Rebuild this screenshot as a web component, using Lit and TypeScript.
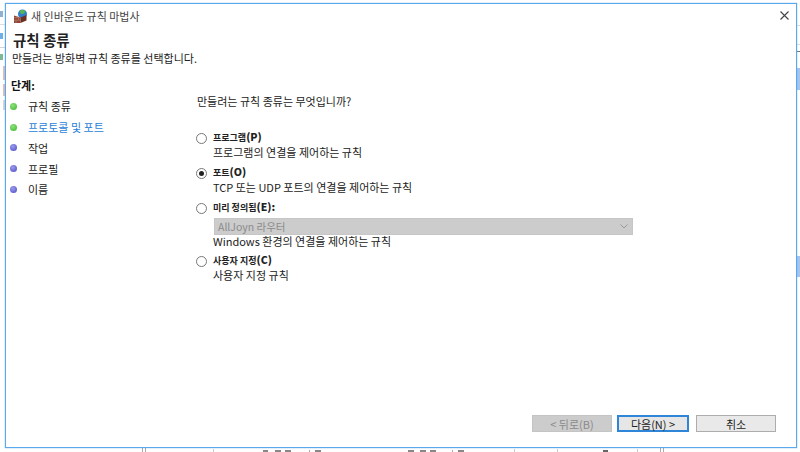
import { css, html, LitElement } from 'lit';
import { customElement } from 'lit/decorators.js';

const steps = [
  { label: '규칙 종류', done: true },
  { label: '프로토콜 및 포트', done: true, current: true },
  { label: '작업' },
  { label: '프로필' },
  { label: '이름' },
];

const options = [
  { label: '프로그램', key: '(P)', desc: '프로그램의 연결을 제어하는 규칙' },
  { label: '포트', key: '(O)', desc: 'TCP 또는 UDP 포트의 연결을 제어하는 규칙', checked: true },
  { label: '미리 정의됨', key: '(E):', desc: 'Windows 환경의 연결을 제어하는 규칙', select: true },
  { label: '사용자 지정', key: '(C)', desc: '사용자 지정 규칙' },
];

// bits of the desktop that peek out around the dialog: x, y, w, h, colour
const peeks: [number, number, number, number, string][] = [
  [0, 11, 3, 6, '#8fb0d0'],
  [0, 33, 3, 6, '#6fb0e6'],
  [0, 24, 5, 1, '#dcdcdc'],
  [0, 47, 5, 1, '#d4d4d4'],
  [0, 54, 3, 6, '#7fb894'],
  [3, 66, 2, 14, '#e2bdb4'],
  [3, 84, 2, 12, '#e2bdb4'],
  [3, 100, 2, 10, '#d4d4d4'],
  [797, 25, 3, 1, '#dcdcdc'],
  [797, 44, 3, 1, '#dcdcdc'],
  [797, 51, 3, 1, '#777'],
  [797, 68, 3, 22, '#a5c4ee'],
  [797, 256, 3, 21, '#a5c4ee'],
  [142, 448, 1, 4, '#aaa'],
  [145, 448, 1, 4, '#aaa'],
  [213, 449, 1, 3, '#ccc'],
  [263, 450, 5, 2, '#888'],
  [275, 450, 6, 2, '#888'],
  [285, 450, 6, 2, '#888'],
  [309, 450, 1, 2, '#aaa'],
  [315, 450, 6, 2, '#888'],
  [408, 450, 6, 2, '#888'],
  [420, 450, 6, 2, '#888'],
  [430, 450, 6, 2, '#888'],
  [452, 450, 1, 2, '#aaa'],
  [458, 450, 6, 2, '#888'],
  [514, 449, 1, 3, '#ccc'],
  [557, 449, 1, 3, '#ccc'],
  [603, 450, 5, 2, '#666'],
  [637, 449, 1, 3, '#ccc'],
  [660, 448, 1, 4, '#aaa'],
  [663, 448, 1, 4, '#aaa'],
];

@customElement('app-root')
export class AppRoot extends LitElement {
  static styles = css`
  :host {
    display: block;
    position: relative;
    width: 800px;
    height: 452px;
    overflow: hidden;
    box-sizing: border-box;
    padding: 3px 3px 4px 5px;
    background: #fff;
    font-family: 'Noto Sans CJK KR', 'Liberation Sans', sans-serif;
    font-size: 11px;
    color: #222;
  }

  .peek { position: absolute; }

  .window {
    position: relative;
    box-sizing: border-box;
    height: 100%;
    display: flex;
    flex-direction: column;
    background: #fff;
    border: 1px solid #5aa8ee;
    box-shadow: 0 0 1px #5aa8ee;
  }

  .titlebar {
    height: 25px;
    display: flex;
    align-items: center;
    gap: 3px;
    padding: 0 0 0 7px;
    color: #444;
    flex: none;
  }
  .titlebar svg.logo { width: 15px; height: 15px; }
  .titlebar span { margin-top: -1px; }
  .titlebar .close { margin-left: auto; margin-right: 7px; margin-top: -3px; width: 9px; height: 9px; }

  .head { padding: 3px 0 0 7px; flex: none; }
  .head h1 { margin: 0; font-size: 14.5px; line-height: 15px; font-weight: 700; }
  .head p { margin: 4px 0 0 -1px; line-height: 14px; }

  .body { flex: 1; display: flex; min-height: 0; }

  .side { width: 190px; flex: none; padding: 13px 0 0 4px; box-sizing: border-box; }
  .side h2 { margin: 0 0 4px 1px; font-size: 11px; line-height: 14px; font-weight: 700; color: #111; }
  .step { height: 20.75px; display: flex; align-items: center; gap: 11px; }
  .dot { width: 7px; height: 7px; border-radius: 50%; background: radial-gradient(circle at 40% 35%, #9c9cec, #4a4ac4); }
  .dot.done { background: radial-gradient(circle at 40% 35%, #8fe07e, #38b828); }
  .step.current { color: #2a7fd8; }

  .main { flex: 1; display: flex; flex-direction: column; min-width: 0; }
  .question { line-height: 14px; margin: 29px 0 0 1px; }
  .opts { display: flex; flex-direction: column; margin-top: 23px; }
  .opt { display: grid; grid-template-columns: 17px 1fr; }
  .radio { width: 11px; height: 11px; box-sizing: border-box; border: 1px solid #777; border-radius: 50%; align-self: center; display: flex; align-items: center; justify-content: center; }
  .radio.on::after { content: ''; width: 5px; height: 5px; border-radius: 50%; background: #222; }
  .name { display: block; height: 14px; font-weight: 700; font-size: 9px; line-height: 14px; color: #222; }
  .name b { font-size: 10.5px; line-height: 0; }
  .desc { grid-column: 2; line-height: 14px; }

  .select { grid-column: 2; width: 419px; height: 17px; box-sizing: border-box; margin: 3px 0 -1px 1px; padding: 0 4px 0 3px; background: #ccc; border: 1px solid #c6c6c6; color: #8b8b8b; font-size: 10.5px; display: flex; align-items: center; justify-content: space-between; }
  .select svg { width: 8px; height: 5px; }

  .footer { flex: none; display: flex; justify-content: flex-end; padding: 0 20px 15px 0; }
  .btn { width: 80px; height: 17px; box-sizing: border-box; border: 1px solid #adadad; background: #e9e9e9; display: flex; align-items: center; justify-content: center; color: #222; }
  .btn.off { background: #ccc; border-color: #c4c4c4; color: #8a8a8a; margin-right: 5px; }
  .btn.primary { width: 72px; border: 2px solid #2f86d8; background: #e6e6e6; margin-right: 7px; }
  `;

  private renderOption(o: typeof options[number] & { checked?: boolean; select?: boolean }, i: number) {
    return html`<div class="opt" style="margin-top:${[0, 7, 7, 6][i]}px">
      <span class="radio ${o.checked ? 'on' : ''}"></span>
      <span class="name">${o.label}<b>${o.key}</b></span>
      ${o.select ? html`<div class="select"><span>AllJoyn 라우터</span>
        <svg viewBox="0 0 8 5" fill="none" stroke="#999" stroke-width="1"><path d="M.5.5 4 4 7.5.5"/></svg></div>` : ''}
      <span class="desc">${o.desc}</span>
    </div>`;
  }

  protected render() {
    return html`
      ${peeks.map(([x, y, w, h, c]) => html`<i class="peek" style="left:${x}px;top:${y}px;width:${w}px;height:${h}px;background:${c}"></i>`)}
      <div class="window">
      <div class="titlebar">
        <svg class="logo" viewBox="0 0 15 15">
          <circle cx="9.500" cy="5" r="4.500" fill="#2f7fc8"/>
          <path d="M6.500 2q3-2.200 6 0l-1.500 2.500-3 .5z" fill="#56b84e"/>
          <path d="M1 6.500l6.500 2V14H1z" fill="#8f4634"/>
          <path d="M7.500 8.500l6-2.500v5.500L7.500 14z" fill="#6b3024"/>
          <path d="M1 8.700h6.500M1 11.200h6.500M4 6.800v2M5.500 9v2.200M3 11.200V14" stroke="#c58b78" stroke-width=".6" fill="none"/>
        </svg>
        <span>새 인바운드 규칙 마법사</span>
        <svg class="close" viewBox="0 0 9 9" stroke="#444" stroke-width="1.100" fill="none"><path d="M.5.5l8 8M8.500.5l-8 8"/></svg>
      </div>
      <div class="head">
        <h1>규칙 종류</h1>
        <p>만들려는 방화벽 규칙 종류를 선택합니다.</p>
      </div>
      <div class="body">
        <div class="side">
          <h2>단계:</h2>
          ${steps.map(s => html`<div class="step ${s.current ? 'current' : ''}"><span class="dot ${s.done ? 'done' : ''}"></span><span>${s.label}</span></div>`)}
        </div>
        <div class="main">
          <div class="question">만들려는 규칙 종류는 무엇입니까?</div>
          <div class="opts">${options.map((o, i) => this.renderOption(o, i))}</div>
        </div>
      </div>
      <div class="footer">
        <div class="btn off">&lt; 뒤로(B)</div>
        <div class="btn primary">다음(N) &gt;</div>
        <div class="btn">취소</div>
      </div>
    </div>`;
  }
}
